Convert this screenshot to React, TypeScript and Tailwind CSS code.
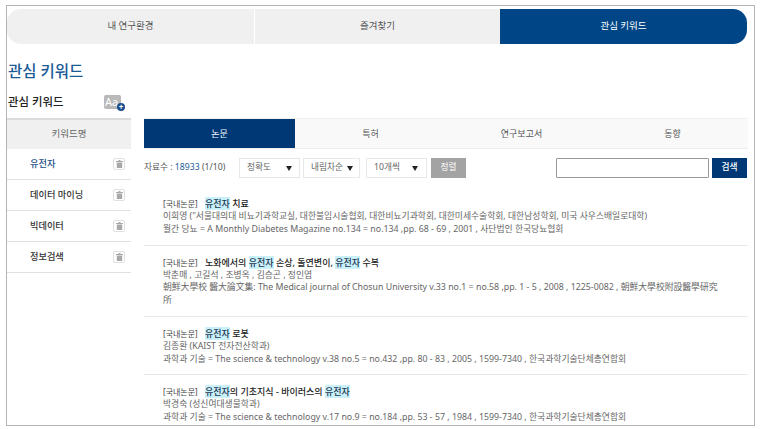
const font = { fontFamily: '"Noto Sans", "Noto Sans CJK KR", sans-serif' };

const keywords = [
    { name: "유전자", active: true },
    { name: "데이터 마이닝", active: false },
    { name: "빅데이터", active: false },
    { name: "정보검색", active: false },
];

function Mark({ children }: { children: string }) {
    return <span className="inline-block bg-[#c9f1fb] leading-[13px] text-[#1f3550]">{children}</span>;
}

function Caret() {
    return (
        <svg width="6" height="5" viewBox="0 0 6 5" className="shrink-0">
            <path d="M0 0h6L3 5z" fill="#222" />
        </svg>
    );
}

function SelectBox({ label, className }: { label: string; className: string }) {
    return (
        <div className={`flex h-5 items-center justify-between border border-[#e8e8e8] pl-[7px] text-[8.7px] text-[#666] ${className}`}>
            <span>{label}</span>
            <Caret />
        </div>
    );
}

function TrashIcon() {
    return (
        <span className="flex h-[12px] w-[12px] items-center justify-center rounded-[2px] border border-[#e0e0e0]">
            <svg width="7" height="8" viewBox="0 0 7 8">
                <path d="M2.5 0h2v1H7v1H0V1h2.5zM.8 2.6h5.4V8H.8z" fill="#a8a8a8" />
            </svg>
        </span>
    );
}

function ResultItem({
    title,
    lines,
    last,
}: {
    title: React.ReactNode;
    lines: string[];
    last?: boolean;
}) {
    return (
        <div className={`pl-[19px] pr-[25px] pt-[10px] ${last ? "" : "border-b border-[#e8e8e8] pb-[9px]"}`}>
            <div className="flex h-[13px] items-center leading-[13px]">
                <span className="w-[42px] shrink-0 text-[8px] text-[#444]">[국내논문]</span>
                <span className="text-[9px] font-medium text-[#222]">{title}</span>
            </div>
            {lines.map((l, i) => (
                <p key={i} className="text-[8.8px] leading-[12.75px] text-[#666]">
                    {l}
                </p>
            ))}
        </div>
    );
}

export default function App() {
    return (
        <div className="h-[429px] w-[765px] overflow-hidden bg-white pl-[6px] pt-[5px]" style={font}>
            <div className="h-[421px] w-[749px] overflow-hidden border border-[#b4b4b4] pr-[6px] pt-[3px]">
                {/* top tabs */}
                <div className="flex h-[35px] text-[9.5px]">
                    <div className="flex w-[247px] items-center justify-center rounded-l-[14px] bg-[#f0f0f0] text-[#555]">내 연구환경</div>
                    <div className="ml-[1px] flex w-[245px] items-center justify-center bg-[#f0f0f0] text-[#555]">즐겨찾기</div>
                    <div className="flex w-[247px] items-center justify-center rounded-r-[14px] bg-[#004687] text-white">관심 키워드</div>
                </div>

                <h1 className="mt-[16px] pl-[1px] text-[15.5px] font-medium leading-[22px] text-[#1a5a96]">관심 키워드</h1>

                <div className="mt-[11px] flex h-[17px] w-[124px] items-center justify-between pl-[1px]">
                    <span className="text-[11.4px] font-medium text-[#222]">관심 키워드</span>
                    <div className="relative mr-[10px] h-[14px] w-[17px] rounded-[2px] bg-[#b9b9b9] pl-[1px] text-[11px] leading-[14px] text-white">
                        Aa
                        <span className="absolute -bottom-[2px] -right-[4px] flex h-[8px] w-[8px] items-center justify-center rounded-full bg-[#1a4d8f] text-[8px] leading-none font-bold">+</span>
                    </div>
                </div>

                <div className="mt-[8px] flex gap-[13px]">
                    {/* keyword list */}
                    <div className="w-[124px] shrink-0">
                        <div className="flex h-[31px] items-center justify-center border-t-2 border-[#dcdcdc] bg-[#f0f0f0] text-[9.5px] text-[#666]">키워드명</div>
                        {keywords.map((k) => (
                            <div key={k.name} className="flex h-[31px] items-center justify-between border-b border-[#e0e0e0] pl-[23px] pr-[6px]">
                                <span className={`text-[9.2px] font-medium ${k.active ? "text-[#1d4f85]" : "text-[#333]"}`}>{k.name}</span>
                                <TrashIcon />
                            </div>
                        ))}
                    </div>

                    <div className="min-w-0 flex-1">
                        {/* category tabs */}
                        <div className="grid h-[31px] grid-cols-4 border-b border-t border-[#efefef] bg-[#f9f9f9] text-[9px] text-[#555]">
                            <div className="flex items-center justify-center bg-[#003876] text-white">논문</div>
                            <div className="flex items-center justify-center">특허</div>
                            <div className="flex items-center justify-center">연구보고서</div>
                            <div className="flex items-center justify-center">동향</div>
                        </div>

                        {/* filters */}
                        <div className="mt-[9px] flex h-5 items-center text-[8.7px]">
                            <span className="w-[95px] text-[#555]">
                                자료수 : <span className="text-[#1d5c96]">18933</span> (1/10)
                            </span>
                            <SelectBox label="정확도" className="w-[61px] pr-[7px]" />
                            <SelectBox label="내림차순" className="ml-[3px] w-[57px] pr-[6px]" />
                            <SelectBox label="10개씩" className="ml-[6px] w-[61px] pr-[8px]" />
                            <button className="ml-[4px] h-5 w-[35px] bg-[#a3a3a3] text-white">정렬</button>
                            <input className="ml-[90px] h-5 w-[153px] rounded-[1px] border border-[#999] bg-white" />
                            <button className="ml-[3px] h-5 w-[35px] bg-[#003876] font-medium text-white">검색</button>
                        </div>

                        {/* results */}
                        <div className="mt-[9px]">
                            <ResultItem
                                title={<><Mark>유전자</Mark> 치료</>}
                                lines={[
                                    '이희영 ("서울대의대 비뇨기과학교실, 대한불임시술협회, 대한비뇨기과학회, 대한미세수술학회, 대한남성학회, 미국 사우스배일로대학)',
                                    "월간 당뇨 = A Monthly Diabetes Magazine no.134 = no.134 ,pp. 68 - 69 , 2001 , 사단법인 한국당뇨협회",
                                ]}
                            />
                            <ResultItem
                                title={<>노화에서의 <Mark>유전자</Mark> 손상, 돌연변이, <Mark>유전자</Mark> 수복</>}
                                lines={[
                                    "박춘매 , 고길석 , 조병옥 , 김승곤 , 정인엽",
                                    "朝鮮大學校 醫大論文集: The Medical journal of Chosun University v.33 no.1 = no.58 ,pp. 1 - 5 , 2008 , 1225-0082 , 朝鮮大學校附設醫學研究所",
                                ]}
                            />
                            <ResultItem
                                title={<><Mark>유전자</Mark> 로봇</>}
                                lines={[
                                    "김종환 (KAIST 전자전산학과)",
                                    "과학과 기술 = The science & technology v.38 no.5 = no.432 ,pp. 80 - 83 , 2005 , 1599-7340 , 한국과학기술단체총연합회",
                                ]}
                            />
                            <ResultItem
                                last
                                title={<><Mark>유전자</Mark>의 기초지식 - 바이러스의 <Mark>유전자</Mark></>}
                                lines={[
                                    "박경숙 (성신여대생물학과)",
                                    "과학과 기술 = The science & technology v.17 no.9 = no.184 ,pp. 53 - 57 , 1984 , 1599-7340 , 한국과학기술단체총연합회",
                                ]}
                            />
                        </div>
                    </div>
                </div>
            </div>
        </div>
    );
}
